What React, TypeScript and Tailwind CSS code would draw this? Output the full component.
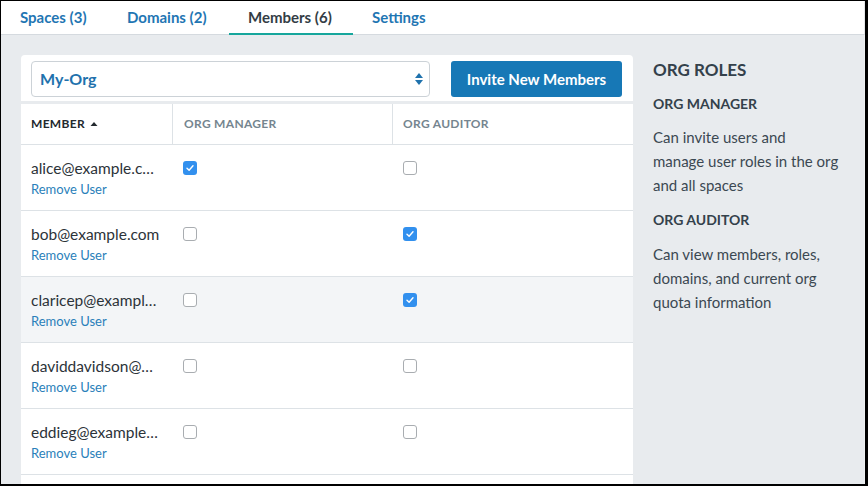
import React from "react";

const tabs = [
    {label: "Spaces (3)", w: "w-[107px]", active: false},
    {label: "Domains (2)", w: "w-[121px]", active: false},
    {label: "Members (6)", w: "w-[124px]", active: true},
    {label: "Settings", w: "w-[110px]", active: false},
];

const members = [
    {email: "alice@example.com", manager: true, auditor: false, hover: false},
    {email: "bob@example.com", manager: false, auditor: true, hover: false},
    {email: "claricep@example.com", manager: false, auditor: true, hover: true},
    {email: "daviddavidson@example.com", manager: false, auditor: false, hover: false},
    {email: "eddieg@example.com", manager: false, auditor: false, hover: false},
    {email: "frank@example.com", manager: false, auditor: false, hover: false},
];

const Checkbox = ({checked}: {checked: boolean}) =>
    checked ? (
        <span className="w-[14px] h-[14px] rounded-[3px] bg-[#3290ee] flex items-center justify-center">
            <svg width="10" height="10" viewBox="0 0 10 10">
                <path d="M2 5.2 L4.1 7.2 L8 2.8" stroke="white" strokeWidth="1.4" fill="none" strokeLinecap="round" strokeLinejoin="round"/>
            </svg>
        </span>
    ) : (
        <span className="w-[14px] h-[14px] rounded-[3px] bg-white border border-[#a9adb1] block"/>
    );

const App = () => {
    return (
        <div
            className="w-[868px] h-[486px] border-t border-l border-r-[3px] border-b-2 border-black overflow-hidden flex flex-col bg-[#e8ebee]"
            style={{fontFamily: "Lato, 'Open Sans', sans-serif"}}
        >
            <nav className="h-[34px] shrink-0 bg-white border-b border-[#d5dadf] flex border-r border-r-[#e6e8ea]">
                {tabs.map((t) => (
                    <div
                        key={t.label}
                        className={`${t.w} relative flex items-center pl-[19px] text-[15px] font-bold ${t.active ? "text-[#333d45]" : "text-[#1f76b3]"}`}
                    >
                        {t.label}
                        {t.active && <span className="absolute left-0 right-0 -bottom-px h-[2px] bg-[#16a69c]"/>}
                    </div>
                ))}
            </nav>

            <div className="flex flex-1 min-h-0 pl-5 pt-5 gap-5 border-r border-[#eef0f2]">
                <div className="w-[612px] shrink-0 flex flex-col gap-[3px]">
                    <div className="bg-white rounded-t-[4px] pt-[6px] pb-[4px] pl-[10px] pr-[11px] flex justify-between">
                        <div className="w-[399px] h-[36px] border border-[#ccd2d7] rounded-[4px] flex items-center justify-between pl-[8px] pr-[5px]">
                            <span className="text-[16px] font-bold text-[#1f72ad]">My-Org</span>
                            <svg width="10" height="16" viewBox="0 0 10 16">
                                <path d="M5 2 L9 7 L1 7 Z" fill="#1f72ad"/>
                                <path d="M5 14 L9 9 L1 9 Z" fill="#1f72ad"/>
                            </svg>
                        </div>
                        <button className="w-[171px] h-[36px] rounded-[3px] bg-[#1778b6] text-white text-[15px] font-bold">
                            Invite New Members
                        </button>
                    </div>

                    <div className="bg-white flex-1">
                        <div className="flex h-[41px] border-b border-[#dde2e6] text-[12px] font-bold tracking-[0.3px]">
                            <div className="w-[152px] flex items-center gap-[5px] pl-[10px] border-r border-[#dde2e6] text-[#23292e]">
                                MEMBER
                                <svg width="8" height="6" viewBox="0 0 8 6">
                                    <path d="M4 1 L7.5 5 L0.5 5 Z" fill="#23292e"/>
                                </svg>
                            </div>
                            <div className="w-[220px] flex items-center pl-[11px] border-r border-[#dde2e6] text-[#75858f]">
                                ORG MANAGER
                            </div>
                            <div className="flex-1 flex items-center pl-[10px] text-[#75858f]">ORG AUDITOR</div>
                        </div>
                        {members.map((m) => (
                            <div
                                key={m.email}
                                className={`flex h-[66px] border-b border-[#dde2e6] ${m.hover ? "bg-[#f3f5f7]" : "bg-white"}`}
                            >
                                <div className="w-[152px] pl-[10px] pr-[12px] pt-[13px]">
                                    <div className="truncate text-[15.5px] leading-[20px] text-[#2c3339]">{m.email}</div>
                                    <div className="text-[13px] leading-[22px] text-[#2a7fba]">Remove User</div>
                                </div>
                                <div className="w-[220px] pl-[10px] pt-4">
                                    <Checkbox checked={m.manager}/>
                                </div>
                                <div className="flex-1 pl-[10px] pt-4">
                                    <Checkbox checked={m.auditor}/>
                                </div>
                            </div>
                        ))}
                    </div>
                </div>

                <aside className="w-[205px] text-[#34414b]">
                    <h2 className="text-[17px] font-bold leading-[24px] mt-[3px]">ORG ROLES</h2>
                    <h3 className="text-[14px] font-bold leading-[24px] mt-[10px]">ORG MANAGER</h3>
                    <p className="text-[15px] leading-[24px] mt-[9px] text-[#3b4852]">
                        Can invite users and<br/>manage user roles in the org<br/>and all spaces
                    </p>
                    <h3 className="text-[14px] font-bold leading-[24px] mt-[11px]">ORG AUDITOR</h3>
                    <p className="text-[15px] leading-[24px] mt-[10px] text-[#3b4852]">
                        Can view members, roles, domains, and current org quota information
                    </p>
                </aside>
            </div>
        </div>
    );
};

export default App;
